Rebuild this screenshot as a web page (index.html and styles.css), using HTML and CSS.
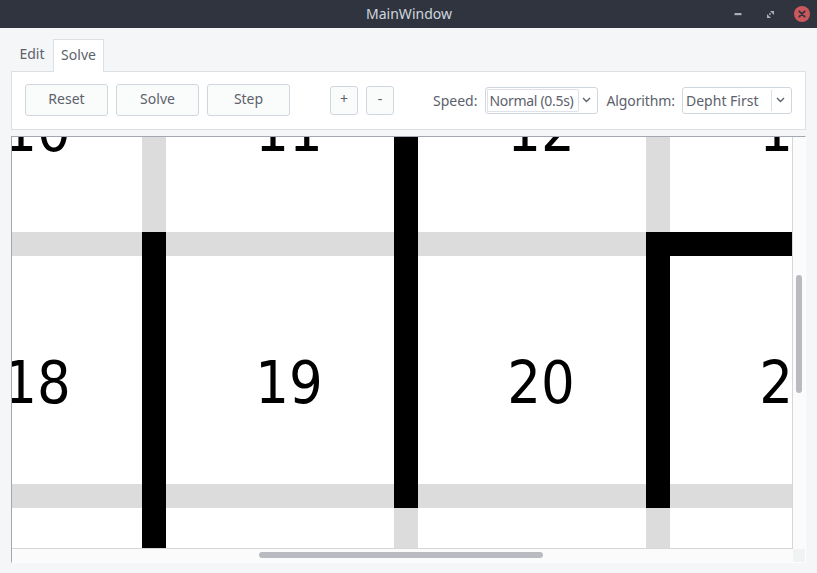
FILE: index.html
```html
<!DOCTYPE html>
<html lang="en">
<head>
<meta charset="utf-8">
<title>MainWindow</title>
<link rel="stylesheet" href="styles.css">
</head>
<body>
<div class="window">
  <header class="titlebar">
    <div class="tb-side"></div>
    <div class="title">MainWindow</div>
    <div class="tb-side controls">
      <svg class="ctl" width="16" height="16" viewBox="0 0 16 16"><rect x="4.5" y="7" width="7" height="2.2" fill="#a9afb8"/></svg>
      <svg class="ctl" width="16" height="16" viewBox="0 0 16 16"><polygon points="8,5 12,5 12,9" fill="#a9afb8"/><polygon points="5,8 5,12 9,12" fill="#a9afb8"/><rect x="7.2" y="7.2" width="1.6" height="1.6" fill="#a9afb8" transform="rotate(45 8 8)"/></svg>
      <svg class="ctl" width="16" height="16" viewBox="0 0 16 16"><circle cx="8" cy="8" r="8" fill="#cc575d"/><path d="M5.3 5.3 L10.7 10.7 M10.7 5.3 L5.3 10.7" stroke="#2f343f" stroke-width="1.8" stroke-linecap="round"/></svg>
    </div>
  </header>

  <main class="content">
    <nav class="tabs">
      <div class="tab">Edit</div>
      <div class="tab active">Solve</div>
    </nav>

    <section class="pane">
      <button class="btn wide">Reset</button>
      <button class="btn wide">Solve</button>
      <button class="btn wide">Step</button>
      <button class="btn small plus">+</button>
      <button class="btn small">-</button>
      <div class="right-group">
        <span class="label">Speed:</span>
        <div class="combo speed">
          <span class="field">Normal (0.5s)</span>
          <span class="sep"></span>
          <svg class="chev" width="9" height="6" viewBox="0 0 9 6"><path d="M1 1 L4.5 4.5 L8 1" fill="none" stroke="#5c616c" stroke-width="1.4"/></svg>
        </div>
        <span class="label algo-label">Algorithm:</span>
        <div class="combo algo">
          <span class="value">Depht First</span>
          <span class="sep"></span>
          <svg class="chev" width="9" height="6" viewBox="0 0 9 6"><path d="M1 1 L4.5 4.5 L8 1" fill="none" stroke="#5c616c" stroke-width="1.4"/></svg>
        </div>
      </div>
    </section>

    <section class="scrollarea">
      <div class="viewport">
        <div class="maze">
          <div class="cell"><span>10</span></div><div class="w"></div><div class="cell"><span>11</span></div><div class="b"></div><div class="cell"><span>12</span></div><div class="w"></div><div class="cell"><span>13</span></div><div class="w"></div>
          <div class="w"></div><div class="b"></div><div class="w"></div><div class="b"></div><div class="w"></div><div class="b"></div><div class="b"></div><div class="b"></div>
          <div class="cell"><span>18</span></div><div class="b"></div><div class="cell"><span>19</span></div><div class="b"></div><div class="cell"><span>20</span></div><div class="b"></div><div class="cell"><span>21</span></div><div class="w"></div>
          <div class="w"></div><div class="b"></div><div class="w"></div><div class="b"></div><div class="w"></div><div class="b"></div><div class="w"></div><div class="b"></div>
          <div class="cell"><span>26</span></div><div class="b"></div><div class="cell"><span>27</span></div><div class="w"></div><div class="cell"><span>28</span></div><div class="w"></div><div class="cell"><span>29</span></div><div class="w"></div>
        </div>
      </div>
      <div class="vbar"><div class="vthumb"></div></div>
      <div class="hbar"><div class="hthumb"></div></div>
      <div class="corner"></div>
    </section>
  </main>
</div>
</body>
</html>
```

FILE: styles.css
```css
* { box-sizing: border-box; }

html, body {
  margin: 0;
  padding: 0;
  background: #f5f6f7;
}

body {
  font-family: "Noto Sans", "Open Sans", sans-serif;
  font-size: 14px;
  color: #5c616c;
}

.window {
  width: 817px;
  height: 573px;
  overflow: hidden;
  background: #f5f6f7;
}

/* Title bar */
.titlebar {
  height: 28px;
  background: #2f343f;
  display: grid;
  grid-template-columns: 1fr auto 1fr;
  align-items: center;
}

.title {
  color: #cfd6df;
  font-size: 14px;
  line-height: 28px;
  padding-left: 1px;
}

.controls {
  display: flex;
  justify-content: flex-end;
  align-items: center;
  gap: 16px;
  padding-right: 7px;
}

.ctl { display: block; }

/* Content */
.content {
  padding: 11px 11px 0 11px;
}

.tabs {
  display: flex;
  height: 32px;
}

.tab {
  height: 32px;
  line-height: 30px;
  text-align: center;
  color: #5c616c;
}

.tab:first-child {
  width: 42px;
}

.tab.active {
  width: 51px;
  height: 33px;
  margin-bottom: -1px;
  background: #ffffff;
  border: 1px solid #dcdfe3;
  border-bottom: none;
  position: relative;
  z-index: 1;
}

.pane {
  height: 59px;
  background: #ffffff;
  border: 1px solid #dcdfe3;
  display: flex;
  align-items: center;
  padding: 0 13px 1px 13px;
}

.btn {
  font-family: inherit;
  font-size: 14px;
  line-height: 1;
  color: #5c616c;
  background: #fafbfb;
  border: 1px solid #cfd6e0;
  border-radius: 3px;
  padding: 0 0 2px 0;
  margin: 0;
}

.btn.wide {
  width: 83px;
  height: 32px;
  margin-right: 8px;
}

.btn.small {
  width: 28px;
  height: 29px;
  margin-right: 8px;
}

.btn.plus { margin-left: 32px; }

.right-group {
  margin-left: auto;
  display: flex;
  align-items: center;
}

.label {
  white-space: nowrap;
}

.label + .combo { margin-left: 8px; }

.algo-label {
  margin-left: 8px;
  letter-spacing: -0.1px;
}

.combo {
  height: 27px;
  background: #ffffff;
  border: 1px solid #cfd6e0;
  border-radius: 3px;
  display: flex;
  align-items: center;
  white-space: nowrap;
  color: #5c616c;
}

.combo.speed {
  width: 113px;
  padding: 1px;
}

.combo.algo {
  width: 110px;
  margin-left: 7px;
}

.field {
  flex: 1;
  height: 23px;
  line-height: 21px;
  border: 1px solid #dfe3e9;
  border-right: none;
  padding-left: 1px;
  overflow: hidden;
  letter-spacing: -0.3px;
}

.value {
  flex: 1;
  padding-left: 3px;
}

.sep {
  width: 1px;
  height: 21px;
  background: #dcdfe3;
}

.chev {
  display: block;
  margin: 0 6px 0 4px;
}

.speed .chev {
  margin: 0 5px 0 3px;
}

/* Scroll area */
.scrollarea {
  margin-top: 6px;
  width: 795px;
  height: 427px;
  border-style: solid;
  border-width: 1px;
  border-color: #a3a8af #fdfdfd #fdfdfd #a3a8af;
  display: grid;
  grid-template-columns: 781px 12px;
  grid-template-rows: 412px 13px;
}

.viewport {
  overflow: hidden;
  background: #ffffff;
  border-right: 1px solid #d3d6db;
  border-bottom: 1px solid #d3d6db;
}

.maze {
  margin-left: -98px;
  margin-top: -133px;
  display: grid;
  grid-template-columns: repeat(4, 228px 24px);
  grid-template-rows: 228px 24px 228px 24px 228px;
  width: 1008px;
}

.cell {
  background: #ffffff;
  display: flex;
  align-items: center;
  justify-content: center;
  padding: 24px 0 0 18px;
  font-family: "DejaVu Sans Condensed", "DejaVu Sans", sans-serif;
  font-stretch: condensed;
  font-size: 59px;
  color: #000000;
  white-space: nowrap;
}

.w { background: #dcdcdc; }
.b { background: #000000; }

.vbar {
  background: #fbfbfb;
  padding-top: 138px;
  display: flex;
  justify-content: center;
}

.vthumb {
  width: 6px;
  height: 118px;
  border-radius: 3px;
  background: #b9bbc0;
}

.hbar {
  background: #fbfbfb;
  padding: 3px 0 0 247px;
}

.hthumb {
  width: 284px;
  height: 6px;
  border-radius: 3px;
  background: #b9bbc0;
}

.corner {
  background: #f1f2f4;
}
```
